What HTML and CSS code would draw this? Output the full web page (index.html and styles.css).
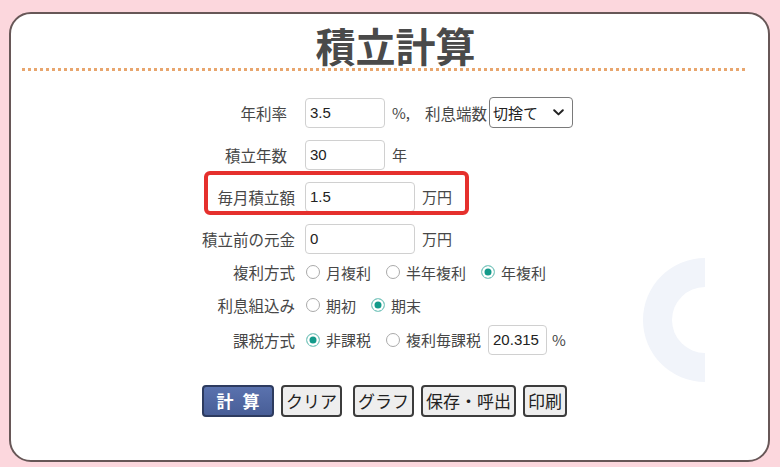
FILE: index.html
```html
<!DOCTYPE html>
<html lang="ja">
<head>
<meta charset="utf-8">
<title>積立計算</title>
<link rel="stylesheet" href="styles.css">
</head>
<body>
<div class="card">
  <h1 class="title">積立計算</h1>
  <div class="rule"></div>
  <form class="form">
    <div class="row">
      <label class="label label-short">年利率</label>
      <input class="field" type="text" value="3.5">
      <span class="unit">%,</span>
      <span class="sublabel">利息端数</span>
      <span class="select-wrap">
        <select class="select"><option>切捨て</option><option>四捨五入</option><option>切上げ</option></select>
        <svg class="chev" width="11" height="7" viewBox="0 0 11 7"><polyline points="1.2,1.2 5.5,5.4 9.8,1.2" fill="none" stroke="#222" stroke-width="2" stroke-linecap="round" stroke-linejoin="round"/></svg>
      </span>
    </div>
    <div class="row">
      <label class="label label-short">積立年数</label>
      <input class="field" type="text" value="30">
      <span class="unit">年</span>
    </div>
    <div class="row row-highlight">
      <label class="label">毎月積立額</label>
      <input class="field field-wide" type="text" value="1.5">
      <span class="unit">万円</span>
    </div>
    <div class="row">
      <label class="label">積立前の元金</label>
      <input class="field field-wide" type="text" value="0">
      <span class="unit">万円</span>
    </div>
    <div class="row row-opt row-opt-first">
      <span class="label">複利方式</span>
      <label class="opt"><input class="radio" type="radio" name="comp">月複利</label>
      <label class="opt"><input class="radio" type="radio" name="comp">半年複利</label>
      <label class="opt"><input class="radio" type="radio" name="comp" checked>年複利</label>
    </div>
    <div class="row row-opt">
      <span class="label">利息組込み</span>
      <label class="opt"><input class="radio" type="radio" name="timing">期初</label>
      <label class="opt"><input class="radio" type="radio" name="timing" checked>期末</label>
    </div>
    <div class="row row-tax">
      <span class="label">課税方式</span>
      <label class="opt"><input class="radio" type="radio" name="tax" checked>非課税</label>
      <label class="opt opt-last"><input class="radio" type="radio" name="tax">複利毎課税</label>
      <input class="field field-tax" type="text" value="20.315">
      <span class="unit unit-tight">%</span>
    </div>
  </form>
  <div class="buttons">
    <button class="btn btn-primary" type="button">計 算</button>
    <button class="btn" type="button">クリア</button>
    <button class="btn btn-spaced" type="button">グラフ</button>
    <button class="btn" type="button">保存・呼出</button>
    <button class="btn" type="button">印刷</button>
  </div>
  <svg class="deco" width="62" height="124" viewBox="0 0 62 124" aria-hidden="true">
    <path d="M62 0 A62 62 0 0 0 62 124 L62 95 A33 33 0 0 1 62 29 Z" fill="#f1f4fa"/>
  </svg>
</div>
</body>
</html>
```
FILE: styles.css
```css
html, body {
  margin: 0;
  padding: 0;
}
body {
  background: #fcd7dd;
  font-family: "Noto Sans CJK JP", "Noto Sans", sans-serif;
  color: #444;
  padding-top: 12px;
  height: 455px;
}
.card {
  position: relative;
  box-sizing: border-box;
  width: 761px;
  height: 450px;
  margin-left: 9px;
  background: #fff;
  border: 2px solid #675757;
  border-radius: 22px;
}
.title {
  margin: 9px 0 0;
  padding-left: 12px;
  font-size: 40px;
  line-height: 45px;
  font-weight: 700;
  color: #4a4a4a;
  text-align: center;
}
.rule {
  height: 3px;
  margin: 0 23px 0 11px;
  background: repeating-linear-gradient(90deg, #e8a66e 0 3px, transparent 3px 6px);
}
.form {
  margin: 26px 0 0;
  padding-left: 165px;
  font-size: 15px;
}
.row {
  display: flex;
  align-items: center;
  height: 31px;
  margin-top: 11px;
}
.row:first-child {
  margin-top: 0;
}
.row-opt {
  height: 22px;
}
.row-opt-first {
  margin-top: 7px;
}
.row-tax {
  height: 31px;
  margin-top: 8px;
}
.label {
  box-sizing: border-box;
  width: 119px;
  margin-right: 10px;
  text-align: right;
  font-size: 15.5px;
  color: #474747;
  white-space: nowrap;
}
.label-short {
  padding-right: 8px;
}
.field {
  box-sizing: border-box;
  width: 80px;
  height: 30px;
  margin: 0;
  border: 1px solid #d0d0d0;
  border-radius: 4px;
  padding: 0 4px;
  font: 15px "Liberation Sans", Arial, sans-serif;
  color: #222;
  background: #fff;
}
.field-wide {
  width: 110px;
}
.field-tax {
  width: 59px;
  margin-left: 7px;
}
.unit {
  margin-left: 7px;
  color: #474747;
}
.unit-tight {
  margin-left: 5px;
}
.sublabel {
  margin-left: 15px;
  margin-right: 2px;
  font-size: 15.5px;
  color: #474747;
}
.select-wrap {
  position: relative;
  display: inline-flex;
}
.select {
  appearance: none;
  -webkit-appearance: none;
  box-sizing: border-box;
  width: 84px;
  height: 31px;
  margin: 0;
  padding: 0 20px 0 3px;
  border: 1px solid #7a7a7a;
  border-radius: 4px;
  background: #fff;
  font: 15px "Noto Sans CJK JP", sans-serif;
  color: #222;
}
.chev {
  position: absolute;
  right: 9px;
  top: 12px;
  pointer-events: none;
}
.row-highlight {
  position: relative;
}
.row-highlight::after {
  content: "";
  position: absolute;
  left: 28px;
  top: -10px;
  width: 265px;
  height: 44px;
  box-sizing: border-box;
  border: 4px solid #e5302d;
  border-radius: 6px;
  pointer-events: none;
}
.opt {
  display: inline-flex;
  align-items: center;
  margin-right: 14px;
  color: #474747;
  white-space: nowrap;
}
.opt-last {
  margin-right: 0;
}
.radio {
  appearance: none;
  -webkit-appearance: none;
  box-sizing: border-box;
  width: 14px;
  height: 14px;
  margin: 0 6px 0 1px;
  border: 1px solid #aaa;
  border-radius: 50%;
  background: #fff;
}
.radio:checked {
  border-color: #8fcfc8;
  background: #139a8a;
  box-shadow: inset 0 0 0 2.5px #fff;
}
.buttons {
  display: flex;
  gap: 7px;
  margin-top: 30px;
  padding-left: 191px;
}
.btn {
  box-sizing: border-box;
  height: 32px;
  margin: 0;
  padding: 0 3px;
  border: 2px solid #3c3c3c;
  border-radius: 4px;
  background: #eeeeee;
  font: 17px "Noto Sans CJK JP", sans-serif;
  line-height: 28px;
  color: #222;
}
.btn-spaced {
  margin-left: 4px;
}
.btn-primary {
  width: 72px;
  background: linear-gradient(#5a72ae, #485e97);
  border-color: #2d3b5f;
  color: #fff;
  font-weight: 700;
  word-spacing: 5px;
}
.deco {
  position: absolute;
  left: 632px;
  top: 244px;
}
```
